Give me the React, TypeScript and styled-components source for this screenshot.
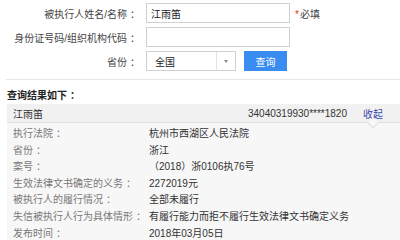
import React from "react";
import styled, { createGlobalStyle } from "styled-components";

const Global = createGlobalStyle`
  html, body { margin: 0; padding: 0; background: #fff; }
  body {
    font-family: "Liberation Sans", "Noto Sans CJK SC", sans-serif;
    font-size: 10px;
    color: #333;
  }
`;

const Page = styled.div`
  width: 400px;
  height: 240px;
  overflow: hidden;
  padding-top: 3px;
  box-sizing: border-box;
`;

const Form = styled.div`
  display: flex;
  flex-direction: column;
  gap: 4px;
`;

const FormRow = styled.div`
  display: flex;
  align-items: center;
  height: 20px;
`;

const Colon = styled.span`
  padding-left: 3px;
  margin-right: -3px;
`;

const Label = styled.div`
  width: 137px;
  text-align: right;
  color: #444;
  margin-right: 9px;
  white-space: nowrap;
`;

const Input = styled.div`
  width: 144px;
  height: 20px;
  box-sizing: border-box;
  border: 1px solid #cfcfcf;
  padding-left: 4px;
  display: flex;
  align-items: center;
  color: #222;
`;

const Required = styled.span`
  margin-left: 5px;
  color: #444;
  & > b { color: #d33; font-weight: normal; margin-right: 1px; }
`;

const Select = styled.div`
  width: 90px;
  height: 20px;
  box-sizing: border-box;
  border: 1px solid #cfcfcf;
  display: flex;
  align-items: stretch;
`;

const SelectText = styled.div`
  flex: 1;
  padding-left: 8px;
  display: flex;
  align-items: center;
  color: #222;
`;

const SelectArrow = styled.div`
  width: 18px;
  border-left: 1px solid #e2e2e2;
  display: flex;
  align-items: center;
  justify-content: center;
  &::after {
    content: "";
    border-left: 2.5px solid transparent;
    border-right: 2.5px solid transparent;
    border-top: 3px solid #888;
  }
`;

const Button = styled.div`
  margin-left: 8px;
  width: 43px;
  height: 20px;
  background: #3b8cf0;
  color: #fff;
  display: flex;
  align-items: center;
  justify-content: center;
`;

const Divider = styled.div`
  margin: 8px 0 0 6px;
  border-top: 1px solid #e6e6e6;
`;

const Title = styled.div`
  margin: 8px 0 0 7px;
  font-weight: bold;
  line-height: 16px;
  color: #222;
`;

const Result = styled.div`
  margin: 0 0 0 7px;
  background: #f7f7f7;
`;

const Bar = styled.div`
  position: relative;
  height: 18px;
  background: #f1f1f1;
  border-bottom: 1px solid #e0e0e0;
  display: flex;
  align-items: center;
  padding: 0 17px 0 6px;
  &::after {
    content: "";
    position: absolute;
    right: 23px;
    bottom: -5px;
    width: 7px;
    height: 7px;
    background: #f7f7f7;
    border-right: 1px solid #dedede;
    border-bottom: 1px solid #dedede;
    transform: rotate(45deg);
  }
`;

const Name = styled.div`
  flex: 1;
  color: #333;
`;

const Id = styled.div`
  color: #333;
`;

const Toggle = styled.div`
  margin-left: 16px;
  color: #3346a8;
`;

const Details = styled.div`
  padding: 3px 0 0 6px;
`;

const DRow = styled.div`
  display: flex;
  line-height: 16.6px;
  white-space: nowrap;
`;

const DLabel = styled.div`
  width: 136px;
  color: #777;
`;

const DValue = styled.div`
  color: #333;
`;

const C = () => <Colon>：</Colon>;

const rows: [string, string][] = [
  ["执行法院", "杭州市西湖区人民法院"],
  ["省份", "浙江"],
  ["案号", "（2018）浙0106执76号"],
  ["生效法律文书确定的义务", "2272019元"],
  ["被执行人的履行情况", "全部未履行"],
  ["失信被执行人行为具体情形", "有履行能力而拒不履行生效法律文书确定义务"],
  ["发布时间", "2018年03月05日"],
];

export default function App() {
  return (
    <Page>
      <Global />
      <Form>
        <FormRow>
          <Label>被执行人姓名/名称<C /></Label>
          <Input>江雨笛</Input>
          <Required><b>*</b>必填</Required>
        </FormRow>
        <FormRow>
          <Label>身份证号码/组织机构代码<C /></Label>
          <Input />
        </FormRow>
        <FormRow>
          <Label>省份<C /></Label>
          <Select>
            <SelectText>全国</SelectText>
            <SelectArrow />
          </Select>
          <Button>查询</Button>
        </FormRow>
      </Form>
      <Divider />
      <Title>查询结果如下<C /></Title>
      <Result>
        <Bar>
          <Name>江雨笛</Name>
          <Id>34040319930****1820</Id>
          <Toggle>收起</Toggle>
        </Bar>
        <Details>
          {rows.map(([l, v]) => (
            <DRow key={l}>
              <DLabel>{l}<C /></DLabel>
              <DValue>{v}</DValue>
            </DRow>
          ))}
        </Details>
      </Result>
    </Page>
  );
}
